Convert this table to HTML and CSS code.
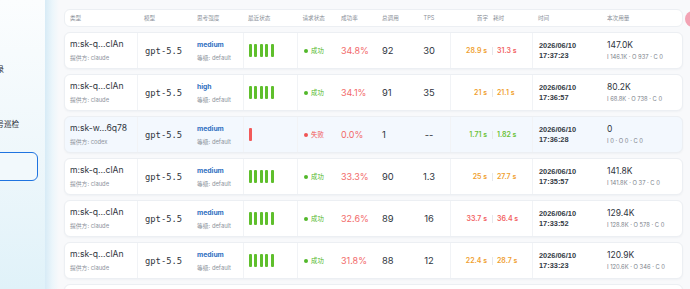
FILE: index.html
```html
<!DOCTYPE html>
<html lang="zh">
<head>
<meta charset="utf-8">
<title>请求记录</title>
<link rel="stylesheet" href="styles.css">
</head>
<body>
<div class="app">
  <aside class="sidebar">
    <nav class="nav">
      <div class="nav-item item-a">请求记录</div>
      <div class="nav-item item-b">账号巡检</div>
      <div class="nav-item item-c active"></div>
    </nav>
  </aside>
  <div class="edge"></div>
  <main class="main">
    <div class="thead grid">
      <div class="c c1">类型</div>
      <div class="c c2">模型</div>
      <div class="c c3">思考强度</div>
      <div class="c c4">最近状态</div>
      <div class="c c5">请求状态</div>
      <div class="c c6">成功率</div>
      <div class="c c7">总调用</div>
      <div class="c c8">TPS</div>
      <div class="c c9"><span class="lt">首字</span><span class="rt">耗时</span></div>
      <div class="c c10">时间</div>
      <div class="c c11">本次用量</div>
    </div>

    <div class="row grid">
      <div class="c c1"><div class="main-t">m:sk-q...clAn</div><div class="sub">提供方: claude</div></div>
      <div class="c c2 sep"><span class="mono">gpt-5.5</span></div>
      <div class="c c3"><div class="lvl">medium</div><div class="sub">等级: default</div></div>
      <div class="c c4 sep"><div class="bars"><i></i><i></i><i></i><i></i><i></i></div></div>
      <div class="c c5 sep"><span class="dot ok"></span><span class="st ok">成功</span></div>
      <div class="c c6"><span class="rate">34.8%</span></div>
      <div class="c c7"><span class="num">92</span></div>
      <div class="c c8"><span class="num">30</span></div>
      <div class="c c9 sep"><span class="lt t-or">28.9 s</span><span class="bar-sep"></span><span class="rt t-rd">31.3 s</span></div>
      <div class="c c10 sep"><div class="tm">2026/06/10</div><div class="tm">17:37:23</div></div>
      <div class="c c11"><div class="use">147.0K</div><div class="use-sub">I 146.1K · O 937 · C 0</div></div>
    </div>

    <div class="row grid">
      <div class="c c1"><div class="main-t">m:sk-q...clAn</div><div class="sub">提供方: claude</div></div>
      <div class="c c2 sep"><span class="mono">gpt-5.5</span></div>
      <div class="c c3"><div class="lvl">high</div><div class="sub">等级: default</div></div>
      <div class="c c4 sep"><div class="bars"><i></i><i></i><i></i><i></i><i></i></div></div>
      <div class="c c5 sep"><span class="dot ok"></span><span class="st ok">成功</span></div>
      <div class="c c6"><span class="rate">34.1%</span></div>
      <div class="c c7"><span class="num">91</span></div>
      <div class="c c8"><span class="num">35</span></div>
      <div class="c c9 sep"><span class="lt t-or">21 s</span><span class="bar-sep"></span><span class="rt t-or">21.1 s</span></div>
      <div class="c c10 sep"><div class="tm">2026/06/10</div><div class="tm">17:36:57</div></div>
      <div class="c c11"><div class="use">80.2K</div><div class="use-sub">I 68.8K · O 738 · C 0</div></div>
    </div>

    <div class="row grid hl">
      <div class="c c1"><div class="main-t">m:sk-w...6q78</div><div class="sub">提供方: codex</div></div>
      <div class="c c2 sep"><span class="mono">gpt-5.5</span></div>
      <div class="c c3"><div class="lvl">medium</div><div class="sub">等级: default</div></div>
      <div class="c c4 sep"><div class="bars"><i class="fail"></i></div></div>
      <div class="c c5 sep"><span class="dot bad"></span><span class="st bad">失败</span></div>
      <div class="c c6"><span class="rate">0.0%</span></div>
      <div class="c c7"><span class="num">1</span></div>
      <div class="c c8"><span class="num">--</span></div>
      <div class="c c9 sep"><span class="lt t-gr">1.71 s</span><span class="bar-sep"></span><span class="rt t-gr">1.82 s</span></div>
      <div class="c c10 sep"><div class="tm">2026/06/10</div><div class="tm">17:36:28</div></div>
      <div class="c c11"><div class="use">0</div><div class="use-sub">I 0 · O 0 · C 0</div></div>
    </div>

    <div class="row grid">
      <div class="c c1"><div class="main-t">m:sk-q...clAn</div><div class="sub">提供方: claude</div></div>
      <div class="c c2 sep"><span class="mono">gpt-5.5</span></div>
      <div class="c c3"><div class="lvl">medium</div><div class="sub">等级: default</div></div>
      <div class="c c4 sep"><div class="bars"><i></i><i></i><i></i><i></i><i></i></div></div>
      <div class="c c5 sep"><span class="dot ok"></span><span class="st ok">成功</span></div>
      <div class="c c6"><span class="rate">33.3%</span></div>
      <div class="c c7"><span class="num">90</span></div>
      <div class="c c8"><span class="num">1.3</span></div>
      <div class="c c9 sep"><span class="lt t-or">25 s</span><span class="bar-sep"></span><span class="rt t-or">27.7 s</span></div>
      <div class="c c10 sep"><div class="tm">2026/06/10</div><div class="tm">17:35:57</div></div>
      <div class="c c11"><div class="use">141.8K</div><div class="use-sub">I 141.8K · O 37 · C 0</div></div>
    </div>

    <div class="row grid">
      <div class="c c1"><div class="main-t">m:sk-q...clAn</div><div class="sub">提供方: claude</div></div>
      <div class="c c2 sep"><span class="mono">gpt-5.5</span></div>
      <div class="c c3"><div class="lvl">medium</div><div class="sub">等级: default</div></div>
      <div class="c c4 sep"><div class="bars"><i></i><i></i><i></i><i></i><i></i></div></div>
      <div class="c c5 sep"><span class="dot ok"></span><span class="st ok">成功</span></div>
      <div class="c c6"><span class="rate">32.6%</span></div>
      <div class="c c7"><span class="num">89</span></div>
      <div class="c c8"><span class="num">16</span></div>
      <div class="c c9 sep"><span class="lt t-rd">33.7 s</span><span class="bar-sep"></span><span class="rt t-rd">36.4 s</span></div>
      <div class="c c10 sep"><div class="tm">2026/06/10</div><div class="tm">17:33:52</div></div>
      <div class="c c11"><div class="use">129.4K</div><div class="use-sub">I 128.8K · O 578 · C 0</div></div>
    </div>

    <div class="row grid">
      <div class="c c1"><div class="main-t">m:sk-q...clAn</div><div class="sub">提供方: claude</div></div>
      <div class="c c2 sep"><span class="mono">gpt-5.5</span></div>
      <div class="c c3"><div class="lvl">medium</div><div class="sub">等级: default</div></div>
      <div class="c c4 sep"><div class="bars"><i></i><i></i><i></i><i></i><i></i></div></div>
      <div class="c c5 sep"><span class="dot ok"></span><span class="st ok">成功</span></div>
      <div class="c c6"><span class="rate">31.8%</span></div>
      <div class="c c7"><span class="num">88</span></div>
      <div class="c c8"><span class="num">12</span></div>
      <div class="c c9 sep"><span class="lt t-or">22.4 s</span><span class="bar-sep"></span><span class="rt t-or">28.7 s</span></div>
      <div class="c c10 sep"><div class="tm">2026/06/10</div><div class="tm">17:33:23</div></div>
      <div class="c c11"><div class="use">120.9K</div><div class="use-sub">I 120.6K · O 346 · C 0</div></div>
    </div>

    <div class="row grid row-peek"></div>
  </main>
  <div class="fab"></div>
</div>
</body>
</html>
```

FILE: styles.css
```css
* { box-sizing: border-box; }
html, body {
  margin: 0;
  padding: 0;
  width: 690px;
  height: 289px;
  overflow: hidden;
  background: #f8f9fb;
  font-family: "Inter", "Noto Sans CJK SC", sans-serif;
  color: #2f3540;
}
.app {
  display: flex;
  height: 289px;
  position: relative;
  overflow: hidden;
}
.sidebar {
  width: 45px;
  flex: none;
  overflow: hidden;
  background: linear-gradient(180deg, #fbfdfe 0%, #eef7fb 55%, #e0f2f9 100%);
}
.nav {
  width: 100px;
  margin-left: -62px;
  display: flex;
  flex-direction: column;
}
.nav-item {
  font-size: 7.5px;
  line-height: 10px;
  color: #2b3038;
  white-space: nowrap;
}
.item-a { margin-top: 65px; padding-left: 36px; }
.item-b { margin-top: 45px; padding-left: 51px; }
.item-c {
  margin-top: 22px;
  height: 29px;
  width: 100px;
  border: 1.5px solid #1f74e0;
  border-radius: 6px;
  background: #f2f9fc;
}
.edge {
  width: 14px;
  flex: none;
  background: linear-gradient(90deg, #d7ebf6 0%, #ecf6fb 55%, #f8f9fb 100%);
}
.main {
  flex: 1;
  padding: 9px 7px 0 5px;
  display: flex;
  flex-direction: column;
  gap: 5px;
  min-width: 0;
}
.grid {
  display: grid;
  grid-template-columns: 72px 53px 53px 54px 39px 40px 32px 42px 82px 69px 81px;
  border: 1px solid #eceff3;
  border-radius: 6px;
  background: #ffffff;
  flex: none;
}
.thead {
  height: 18px;
  font-size: 5.6px;
  color: #8a9099;
  align-items: center;
}
.row {
  height: 37px;
  box-shadow: 0 1px 2px rgba(30, 50, 80, 0.04);
}
.row.hl { background: #f3f8fe; }
.c {
  display: flex;
  flex-direction: column;
  justify-content: center;
  padding-left: 6px;
  white-space: nowrap;
  min-width: 0;
}
.thead .c { display: block; }
.c1 { padding-left: 5px; }
.c2 { padding-left: 7px; }
.c3 { padding-left: 7px; }
.c4 { padding-left: 5px; }
.c5 { padding-left: 5.5px; }
.c6 { padding-left: 5px; }
.c7 { padding-left: 6px; }
.c8 { padding-left: 0; align-items: center; text-align: center; }
.c9 { padding-left: 0; flex-direction: row; align-items: center; justify-content: flex-start; }
.c10 { padding-left: 6px; }
.c11 { padding-left: 6px; }
.row .sep { border-left: 1px solid #f1f3f6; }
.row .c5 { flex-direction: row; align-items: center; justify-content: flex-start; }

.main-t { font-size: 8.6px; line-height: 11px; color: #2f3540; }
.sub { font-size: 5.8px; line-height: 9px; margin-top: 3px; color: #8c929b; }
.mono { font-family: "DejaVu Sans Mono", monospace; font-size: 8.8px; color: #2f3540; }
.lvl { font-size: 6.8px; line-height: 11px; font-weight: 700; color: #2f6fc1; }

.bars { display: flex; gap: 2.4px; align-items: center; }
.bars i {
  display: block;
  width: 3px;
  height: 13px;
  border-radius: 1px;
  background: #5fbf2c;
}
.bars i.fail { background: #f25a5a; }

.dot { width: 4px; height: 4px; border-radius: 50%; flex: none; margin-right: 3.5px; }
.dot.ok { background: #52b82a; }
.dot.bad { background: #f05454; }
.st { font-size: 6.4px; }
.st.ok { color: #52b82a; }
.st.bad { color: #f05454; }

.rate { font-size: 9px; color: #f26a6a; }
.num { font-size: 9.4px; color: #2f3540; }

.c9 .lt { width: 36px; text-align: right; flex: none; }
.row .c9 .lt, .row .c9 .rt { font-size: 7px; font-weight: 600; }
.thead .c9 { display: flex; }
.thead .c9 .lt { width: 38px; }
.thead .c9 .rt { padding-left: 5px; }
.bar-sep { width: 1px; height: 8px; background: #e6e8ec; margin: 0 4.5px; flex: none; }
.t-or { color: #f0a030; }
.t-rd { color: #f26262; }
.t-gr { color: #6cc235; }

.tm {
  font-family: "Liberation Sans", "Noto Sans CJK SC", sans-serif;
  font-size: 7.4px;
  line-height: 10px;
  font-weight: 700;
  color: #333a44;
}
.use { font-size: 8.5px; line-height: 11px; color: #2f3540; }
.use-sub { font-size: 5.8px; line-height: 8px; margin-top: 2px; color: #7d838c; }

.fab {
  position: absolute;
  left: 685px;
  top: 11px;
  width: 16px;
  height: 16px;
  border-radius: 50%;
  background: #f3a3b4;
}
```
